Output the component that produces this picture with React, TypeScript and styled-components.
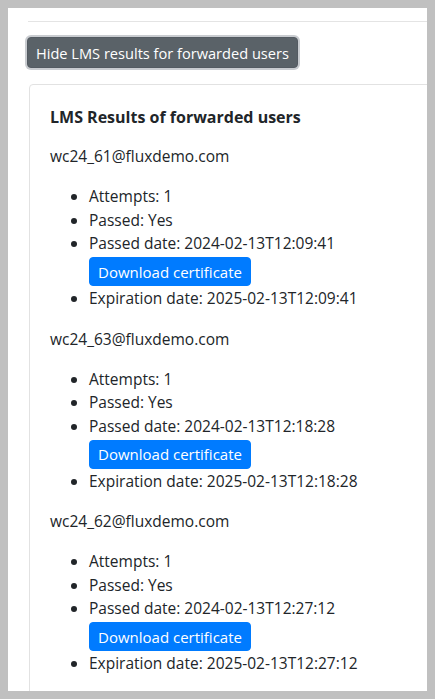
import React from "react";
import styled, { createGlobalStyle } from "styled-components";

const Global = createGlobalStyle`
  html, body { margin: 0; padding: 0; background: #c0c0c0; }
  body { font-family: "Open Sans", "Noto Sans", Arial, sans-serif; color: #212529; }
  * { box-sizing: border-box; }
`;

const Frame = styled.div`
  padding: 8px;
  height: 699px;
`;

const Panel = styled.div`
  background: #fff;
  height: 683px;
  overflow: hidden;
  padding-left: 20px;
`;

const Rule = styled.div`
  margin-top: 13px;
  height: 1px;
  background: #e4e4e4;
`;

const ToggleButton = styled.button`
  margin: 15px 0 0 -1px;
  height: 31px;
  padding: 0 8px;
  display: flex;
  align-items: center;
  background: #5a6268;
  color: #fff;
  border: 1px solid #545b62;
  border-radius: 4px;
  font-family: inherit;
  font-size: 14.6px;
  box-shadow: 0 0 0 2px #c9ccd0;
  cursor: pointer;
`;

const Card = styled.section`
  margin: 16px 0 0 1px;
  width: 440px;
  border: 1px solid #e2e2e2;
  border-radius: 4px;
  padding: 20px;
`;

const Title = styled.h5`
  margin: 0 0 16px;
  font-size: 16px;
  line-height: 24px;
  font-weight: 700;
`;

const Email = styled.p`
  margin: 0 0 16.5px;
  font-size: 15.5px;
  line-height: 23.5px;
`;

const List = styled.ul`
  margin: 0 0 17px;
  padding-left: 39px;
  font-size: 15.5px;
  line-height: 23.5px;
`;

const Item = styled.li``;

const DownloadButton = styled.button`
  display: block;
  margin: 1.5px 0 1px;
  height: 29px;
  padding: 0 8px;
  background: #007bff;
  color: #fff;
  border: 1px solid #007bff;
  border-radius: 4px;
  font-family: inherit;
  font-size: 15px;
  cursor: pointer;
`;

type Result = { email: string; passed: string; expires: string };

const results: Result[] = [
  { email: "wc24_61@fluxdemo.com", passed: "2024-02-13T12:09:41", expires: "2025-02-13T12:09:41" },
  { email: "wc24_63@fluxdemo.com", passed: "2024-02-13T12:18:28", expires: "2025-02-13T12:18:28" },
  { email: "wc24_62@fluxdemo.com", passed: "2024-02-13T12:27:12", expires: "2025-02-13T12:27:12" },
];

export default function App() {
  return (
    <>
      <Global />
      <Frame>
        <Panel>
          <Rule />
          <ToggleButton>Hide LMS results for forwarded users</ToggleButton>
          <Card>
            <Title>LMS Results of forwarded users</Title>
            {results.map((r) => (
              <React.Fragment key={r.email}>
                <Email>{r.email}</Email>
                <List>
                  <Item>Attempts: 1</Item>
                  <Item>Passed: Yes</Item>
                  <Item>
                    Passed date: {r.passed}
                    <DownloadButton>Download certificate</DownloadButton>
                  </Item>
                  <Item>Expiration date: {r.expires}</Item>
                </List>
              </React.Fragment>
            ))}
          </Card>
        </Panel>
      </Frame>
    </>
  );
}
